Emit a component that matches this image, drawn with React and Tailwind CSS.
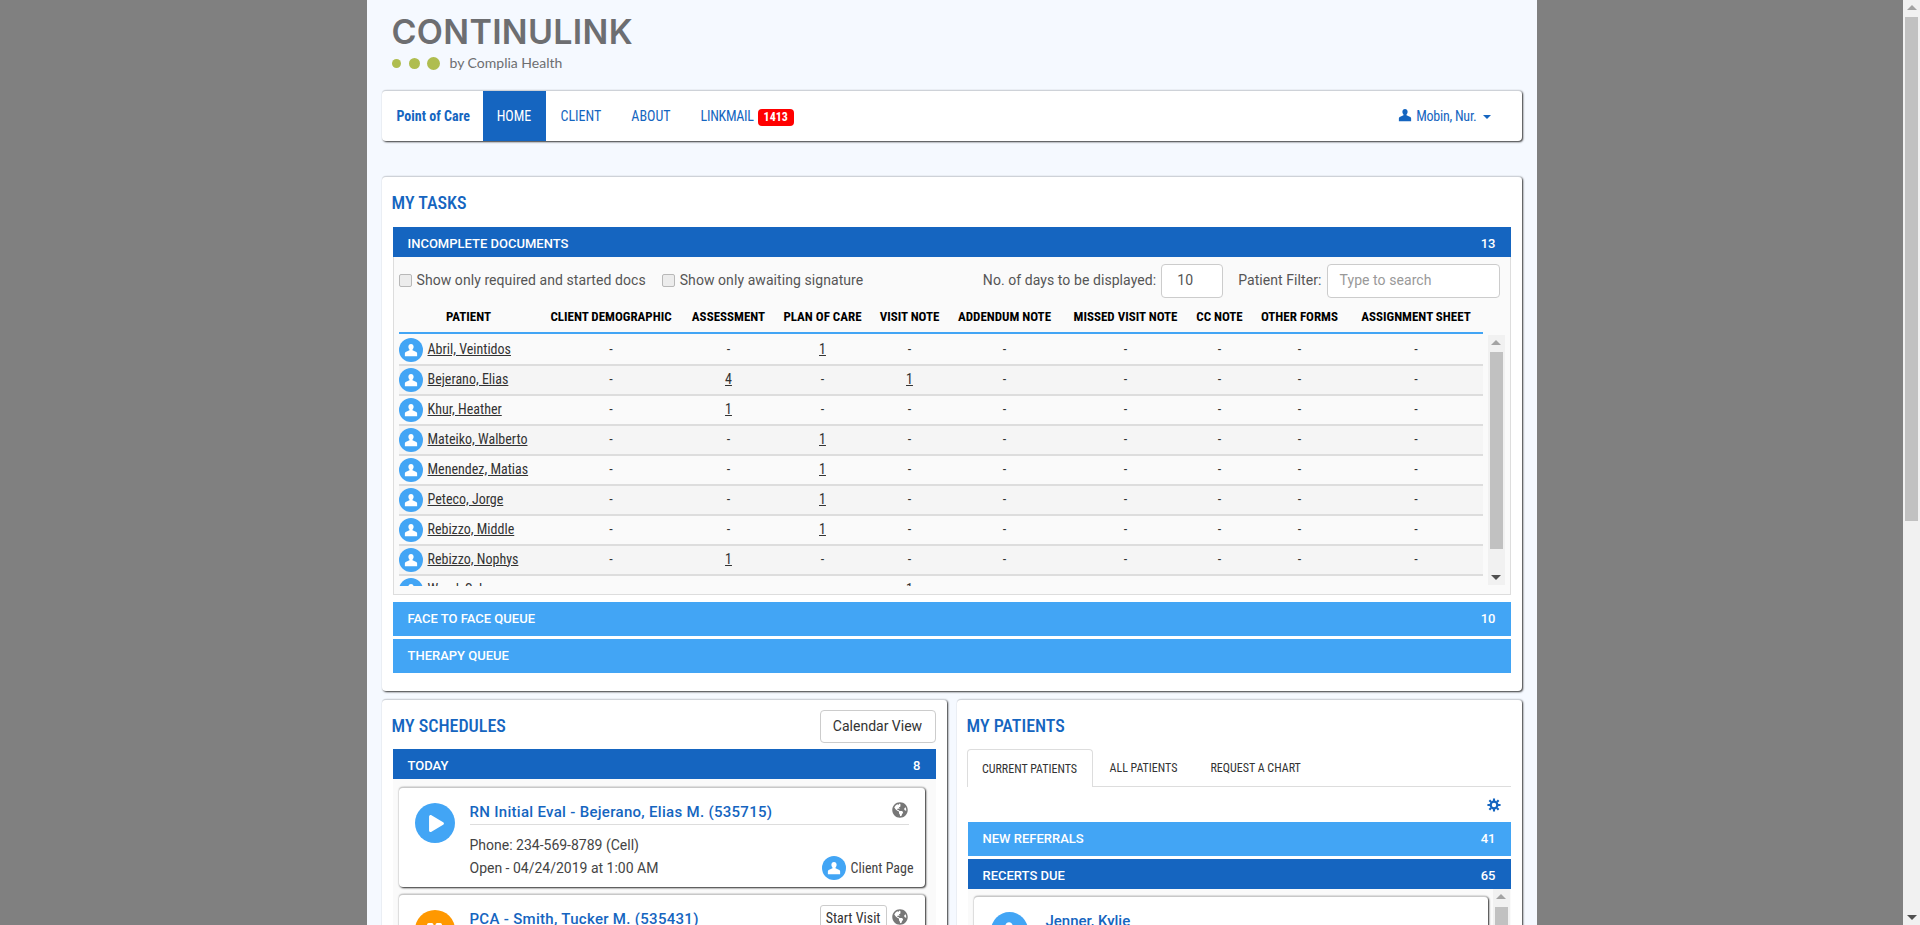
import { FaGlobeAmericas, FaPlay, FaPause } from 'react-icons/fa';

const COLS = 'grid grid-cols-[140px_145px_90px_98px_76px_114px_128px_60px_100px_133px]';

const HEADERS = ['CLIENT DEMOGRAPHIC', 'ASSESSMENT', 'PLAN OF CARE', 'VISIT NOTE', 'ADDENDUM NOTE', 'MISSED VISIT NOTE', 'CC NOTE', 'OTHER FORMS', 'ASSIGNMENT SHEET'];

const ROWS = [
    { name: 'Abril, Veintidos', plan: 1 },
    { name: 'Bejerano, Elias', assessment: 4, visit: 1 },
    { name: 'Khur, Heather', assessment: 1 },
    { name: 'Mateiko, Walberto', plan: 1 },
    { name: 'Menendez, Matias', plan: 1 },
    { name: 'Peteco, Jorge', plan: 1 },
    { name: 'Rebizzo, Middle', plan: 1 },
    { name: 'Rebizzo, Nophys', assessment: 1 },
    { name: 'Wood, Sal', visit: 1 },
];

// glyphicon style silhouette, FaUser is too round for this
const UserGlyph = ({ className }) => (
    <svg viewBox="0 0 16 16" fill="currentColor" className={className}>
        <path d="M8 1C6.2 1 5 2.4 5 4.2c0 1.3.5 2.5 1.3 3.2v1L2.5 10c-1 .4-1.5 1-1.5 2v3h14v-3c0-1-.5-1.6-1.5-2L9.7 8.4v-1C10.5 6.7 11 5.5 11 4.2 11 2.4 9.8 1 8 1z" />
    </svg>
);

const CogGlyph = ({ className }) => (
    <svg viewBox="0 0 16 16" fill="none" stroke="currentColor" className={className}>
        <circle cx="8" cy="8" r="3.8" strokeWidth="2.6" />
        <path strokeWidth="2.4" d="M8 .5v3M8 12.5v3M.5 8h3M12.5 8h3M2.7 2.7l2 2M11.3 11.3l2 2M2.7 13.3l2-2M11.3 4.7l2-2" />
    </svg>
);

const Avatar = ({ size = 'w-6 h-6', icon = 'w-[14px] h-[14px]' }) => (
    <span className={`${size} shrink-0 rounded-full bg-[#42a5f5] text-white flex items-center justify-center`}>
        <UserGlyph className={icon} />
    </span>
);

const Bar = ({ label, count, dark, tall }) => (
    <div className={`${dark ? 'bg-[#1565c0]' : 'bg-[#42a5f5]'} ${tall ? 'h-[34px]' : 'h-[30px] pt-[3px]'} flex items-center justify-between px-[15px] text-white text-[13px] font-medium`}>
        <span>{label}</span>
        <span>{count}</span>
    </div>
);

const Cell = ({ value }) => (
    <div className="text-center -mt-[2px]">
        {value ? <a className="underline">{value}</a> : '-'}
    </div>
);

const ScrollTrack = ({ className, thumb }) => (
    <div className={`${className} bg-[#f1f1f1] flex flex-col items-center justify-between pt-[5px] pb-[5px] relative`}>
        <span className="w-0 h-0 border-x-[5px] border-x-transparent border-b-[5px] border-b-[#a3a3a3]" />
        <div className={`absolute left-[2px] right-[2px] bg-[#c1c1c1] ${thumb}`} />
        <span className="w-0 h-0 border-x-[5px] border-x-transparent border-t-[5px] border-t-[#505050]" />
    </div>
);

const Card = ({ children, className }) => (
    <div className={`${className} bg-white rounded-[4px] border-t border-t-[#ced2d8] shadow-[1px_1px_2px_rgba(0,0,0,0.8)]`}>
        {children}
    </div>
);

const Heading = ({ children }) => (
    <h2 className="text-[18px] leading-[22px] font-medium text-[#1565c0] [font-stretch:condensed]">{children}</h2>
);

const Checkbox = ({ className }) => (
    <span className={`${className} w-[13px] h-[13px] shrink-0 rounded-[2px] border border-[#b8b8b8] bg-[#ececec]`} />
);

const Visit = ({ title, icon, iconBg, top, phone, open }) => (
    <div className="ml-[6px] mr-[11px] mb-[7px] bg-white rounded-[4px] border-t border-t-[#c8c8c8] shadow-[1px_1px_2px_rgba(0,0,0,0.8),0_0_2px_rgba(0,0,0,0.25)] flex h-[100px] pl-[16px] pr-[16px] pt-[15px]">
        <span className={`w-10 h-10 shrink-0 rounded-full ${iconBg} text-white text-[17px] flex items-center justify-center`}>{icon}</span>
        <div className="flex-1 ml-[15px] flex flex-col">
            <div className="h-[22px] border-b border-b-[#dddddd] flex justify-between items-start">
                <span className="text-[15px] leading-[18px] font-medium text-[#1565c0] tracking-[0.3px]">{title}</span>
                <span className="flex items-start gap-[5px] mr-[1px]">
                    {top}
                    <FaGlobeAmericas className="text-[16px] text-[#777777] -mt-[1px]" />
                </span>
            </div>
            <div className="mt-[9px] text-[14px] leading-[23px] text-[#444444]">{phone}</div>
            <div className="flex justify-between items-center -mr-[5px]">
                <span className="text-[14px] leading-[23px] text-[#444444]">{open}</span>
                <span className="flex items-center gap-[5px] text-[14px] text-[#444444] -mt-[1px] [font-stretch:condensed]">
                    <Avatar />
                    Client Page
                </span>
            </div>
        </div>
    </div>
);

export default function App() {
    return (
        <div className="h-screen overflow-hidden flex bg-[#808080] font-[Roboto,sans-serif]">
            <div className="flex-1 flex justify-center">
                <div className="w-[1170px] h-full bg-[#f5f9ff] px-[15px]">
                    {/* logo */}
                    <div className="h-[90px] pl-[10px] pt-[13px] text-[#6d6e71]">
                        <div className="text-[34px] leading-[38px] font-semibold font-[Inter,sans-serif] tracking-[0.3px]">CONTINULINK</div>
                        <div className="flex items-center mt-[3px]">
                            <span className="w-[9px] h-[9px] rounded-full bg-[#afbd4f]" />
                            <span className="w-[11px] h-[11px] rounded-full bg-[#afbd4f] ml-[8px]" />
                            <span className="w-[13px] h-[13px] rounded-full bg-[#afbd4f] ml-[7px]" />
                            <span className="ml-[10px] text-[14px] leading-[18px] font-[Lato,sans-serif]">by Complia Health</span>
                        </div>
                    </div>

                    {/* nav */}
                    <Card className="h-[51px] flex items-stretch text-[14px] text-[#1565c0] [font-stretch:condensed]">
                        <span className="w-[101px] pl-[15px] flex items-center font-bold">Point of Care</span>
                        <span className="w-[63px] bg-[#1565c0] text-white flex items-center justify-center">HOME</span>
                        <span className="ml-[15px] flex items-center">CLIENT</span>
                        <span className="ml-[30px] flex items-center">ABOUT</span>
                        <span className="ml-[30px] flex items-center gap-[4px]">
                            <span className="tracking-[-0.3px]">LINKMAIL</span>
                            <span className="mt-[2px] h-[17px] px-[6px] rounded-[4px] bg-[#ff0000] text-white text-[12px] font-bold flex items-center">1413</span>
                        </span>
                        <span className="ml-auto mr-[31px] flex items-center gap-[4px]">
                            <UserGlyph className="w-[14px] h-[14px] -mt-[2px]" />
                            <span className="tracking-[-0.25px]">Mobin, Nur.</span>
                            <span className="ml-[2px] mt-[2px] w-0 h-0 border-x-[4px] border-x-transparent border-t-[4px] border-t-[#1565c0]" />
                        </span>
                    </Card>

                    {/* my tasks */}
                    <Card className="mt-[35px] h-[515px] px-[11px]">
                        <div className="h-[50px] pt-[15px] -ml-px"><Heading>MY TASKS</Heading></div>
                        <Bar label="INCOMPLETE DOCUMENTS" count="13" dark />
                        <div className="h-[338px] bg-[#fafafa] border-x border-b border-[#dddddd] px-[5px]">
                            <div className="h-[47px] flex items-center text-[14px] text-[#555555] tracking-[0.07px]">
                                <Checkbox className="mr-[5px]" />
                                <span>Show only required and started docs</span>
                                <Checkbox className="ml-[16px] mr-[5px]" />
                                <span>Show only awaiting signature</span>
                                <span className="ml-auto">No. of days to be displayed:</span>
                                <span className="ml-[5px] w-[62px] h-[34px] border border-[#cccccc] rounded-[4px] bg-white pl-[15px] flex items-center">10</span>
                                <span className="ml-[15px]">Patient Filter:</span>
                                <span className="ml-[5px] mr-[5px] w-[173px] h-[34px] border border-[#cccccc] rounded-[4px] bg-white pl-[12px] flex items-center text-[#999999]">Type to search</span>
                            </div>
                            <div className={`${COLS} w-[1084px] h-[30px] pb-[3px] items-center border-b-[2px] border-b-[#42a5f5] text-[13px] font-bold text-black text-center whitespace-nowrap [font-stretch:condensed]`}>
                                <div>PATIENT</div>
                                {HEADERS.map((h) => <div key={h}>{h}</div>)}
                            </div>
                            <div className="flex mt-[2px]">
                                <div className="w-[1084px] h-[250px] overflow-hidden text-[14px] text-[#333333] [font-stretch:condensed]">
                                    {ROWS.map((r, i) => (
                                        <div key={r.name} className={`${COLS} h-[30px] items-center border-b-2 border-b-[#dddddd] ${i % 2 ? 'bg-[#f5f5f5]' : 'bg-[#fafafa]'}`}>
                                            <div className="flex items-center gap-[5px]">
                                                <Avatar />
                                                <a className="underline -mt-[2px]">{r.name}</a>
                                            </div>
                                            <Cell />
                                            <Cell value={r.assessment} />
                                            <Cell value={r.plan} />
                                            <Cell value={r.visit} />
                                            <Cell /><Cell /><Cell /><Cell /><Cell />
                                        </div>
                                    ))}
                                </div>
                                <ScrollTrack className="ml-[5px] -mt-px w-[17px] h-[250px]" thumb="top-[17px] h-[197px]" />
                            </div>
                        </div>
                        <div className="mt-[7px]"><Bar label="FACE TO FACE QUEUE" count="10" tall /></div>
                        <div className="mt-[3px]"><Bar label="THERAPY QUEUE" tall /></div>
                    </Card>

                    {/* bottom */}
                    <div className="mt-[8px] flex gap-[10px]">
                        <Card className="w-[565px] h-[400px] px-[11px]">
                            <div className="h-[49px] pt-[10px] -ml-px flex justify-between items-start">
                                <div className="pt-[5px]"><Heading>MY SCHEDULES</Heading></div>
                                <button className="w-[116px] h-[33px] border border-[#cccccc] rounded-[4px] text-[14px] text-[#333333]">Calendar View</button>
                            </div>
                            <Bar label="TODAY" count="8" dark />
                            <div className="bg-[#fafafa] pt-[8px]">
                                <Visit
                                    title="RN Initial Eval - Bejerano, Elias M. (535715)"
                                    iconBg="bg-[#42a5f5]"
                                    icon={<FaPlay className="ml-[3px]" />}
                                    phone="Phone: 234-569-8789 (Cell)"
                                    open="Open - 04/24/2019 at 1:00 AM"
                                />
                                <Visit
                                    title="PCA - Smith, Tucker M. (535431)"
                                    iconBg="bg-[#ff9800]"
                                    icon={<FaPause />}
                                    top={<span className="-mt-[5px] h-[26px] px-[5px] border border-[#cccccc] rounded-[3px] text-[14px] leading-[24px] text-[#333333] bg-white [font-stretch:condensed]">Start Visit</span>}
                                    phone="Phone: 234-569-8789 (Cell)"
                                    open="Open - 04/24/2019 at 1:00 AM"
                                />
                            </div>
                        </Card>

                        <Card className="w-[565px] h-[400px] pl-[10px] pr-[11px]">
                            <div className="h-[49px] pt-[15px]"><Heading>MY PATIENTS</Heading></div>
                            <div className="h-[38px] flex border-b border-b-[#dddddd] text-[12px] text-[#333333] [font-stretch:condensed]">
                                <span className="w-[126px] h-[38px] flex items-center justify-center bg-white border border-[#dddddd] border-b-0 rounded-t-[4px]">CURRENT PATIENTS</span>
                                <span className="ml-[17px] flex items-center">ALL PATIENTS</span>
                                <span className="ml-[33px] flex items-center">REQUEST A CHART</span>
                            </div>
                            <div className="h-[35px] pt-[1px] flex items-center justify-end pr-[10px] text-[#1565c0]"><CogGlyph className="w-[14px] h-[14px]" /></div>
                            <div className="ml-px"><Bar label="NEW REFERRALS" count="41" tall /></div>
                            <div className="mt-[3px] ml-px"><Bar label="RECERTS DUE" count="65" dark /></div>
                            <div className="ml-px bg-[#fafafa] flex pt-[7px] pl-[6px] pr-px gap-[5px]">
                                <div className="flex-1 h-[100px] bg-white rounded-[4px] border-t border-t-[#c8c8c8] shadow-[1px_1px_2px_rgba(0,0,0,0.8),0_0_2px_rgba(0,0,0,0.25)] flex pl-[17px] pt-[15px]">
                                    <Avatar size="w-[37px] h-[37px]" icon="w-[20px] h-[20px]" />
                                    <span className="ml-[18px] text-[15px] leading-[18px] font-medium text-[#1565c0]">Jenner, Kylie</span>
                                </div>
                                <ScrollTrack className="w-[17px] h-[100px] -mt-[7px]" thumb="top-[18px] h-[82px]" />
                            </div>
                        </Card>
                    </div>
                </div>
            </div>
            <ScrollTrack className="w-[17px] h-full" thumb="top-[17px] h-[504px]" />
        </div>
    );
}
